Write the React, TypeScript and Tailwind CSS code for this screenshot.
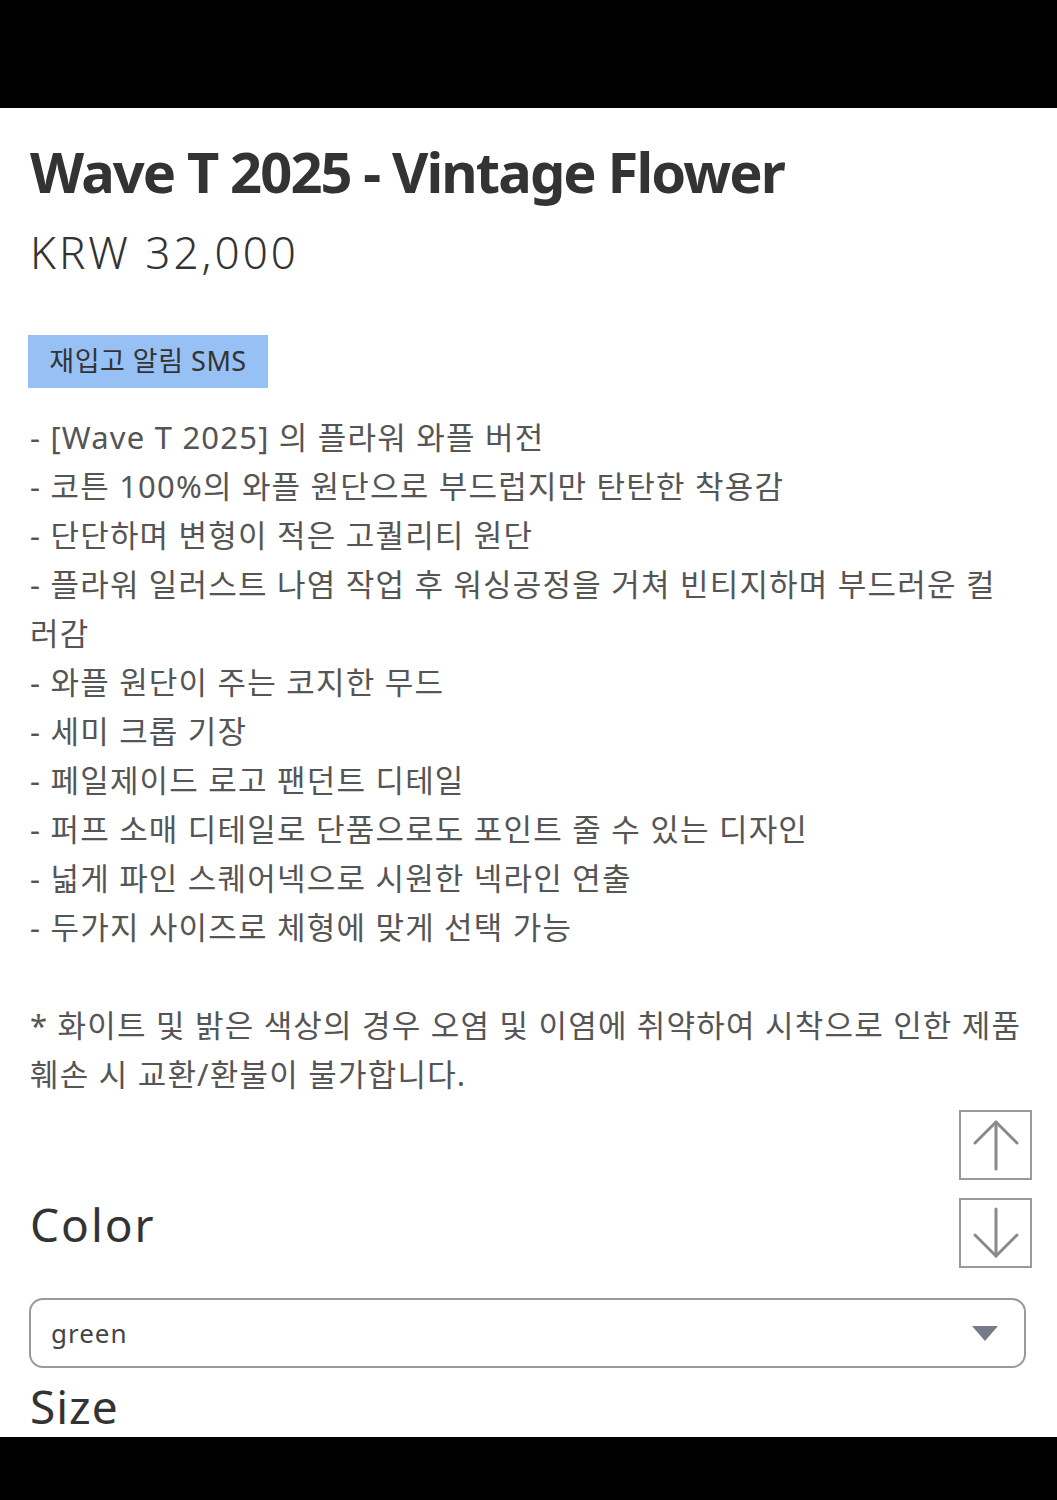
import React from 'react'

const bullets = [
  '- [Wave T 2025] 의 플라워 와플 버전',
  '- 코튼 100%의 와플 원단으로 부드럽지만 탄탄한 착용감',
  '- 단단하며 변형이 적은 고퀄리티 원단',
  '- 플라워 일러스트 나염 작업 후 워싱공정을 거쳐 빈티지하며 부드러운 컬',
  '러감',
  '- 와플 원단이 주는 코지한 무드',
  '- 세미 크롭 기장',
  '- 페일제이드 로고 팬던트 디테일',
  '- 퍼프 소매 디테일로 단품으로도 포인트 줄 수 있는 디자인',
  '- 넓게 파인 스퀘어넥으로 시원한 넥라인 연출',
  '- 두가지 사이즈로 체형에 맞게 선택 가능',
]

const latin = "font-['Noto_Sans','Noto_Sans_CJK_KR',sans-serif]"
const body = "font-['Noto_Sans','Noto_Sans_CJK_KR',sans-serif]"

function ArrowBox({ dir }: { dir: 'up' | 'down' }) {
  return (
    <button className="w-[73px] h-[70px] border-2 border-[#9a9a9a] bg-white flex items-center justify-center">
      <svg width="48" height="56" viewBox="0 0 48 56" fill="none" stroke="#8a8a8a" strokeWidth="3" strokeLinecap="round" strokeLinejoin="round">
        {dir === 'up' ? (
          <>
            <path d="M24 52V5" />
            <path d="M3 26L24 5l21 21" />
          </>
        ) : (
          <>
            <path d="M24 4v47" />
            <path d="M3 30l21 21 21-21" />
          </>
        )}
      </svg>
    </button>
  )
}

export default function App() {
  return (
    <div className="w-[1057px] h-[1500px] bg-black flex flex-col overflow-hidden">
      <div className="h-[108px] shrink-0 bg-black" />
      <div className="relative h-[1329px] shrink-0 bg-white overflow-hidden px-[30px]">
        <h1 className={`${latin} mt-[26px] text-[56px] leading-[74px] font-bold tracking-[-1.9px] text-[#333]`}>
          Wave T 2025 - Vintage Flower
        </h1>
        <div className={`${latin} mt-[14px] text-[44px] leading-[60px] font-light tracking-[3px] text-[#333]`}>
          KRW 32,000
        </div>

        <div className="mt-[53px]">
          <button className={`${body} -ml-[2px] w-[240px] h-[53px] bg-[#97c0f5] text-[27px] tracking-[0.5px] text-[#333] flex items-center justify-center`}>
            재입고 알림 SMS
          </button>
        </div>

        <div className={`${body} mt-[25px] text-[31px] leading-[49px] tracking-[1.2px] text-[#555] whitespace-nowrap`}>
          {bullets.map((b) => (
            <div key={b}>{b}</div>
          ))}
          <div className="h-[49px]" />
          <div>* 화이트 및 밝은 색상의 경우 오염 및 이염에 취약하여 시착으로 인한 제품</div>
          <div>훼손 시 교환/환불이 불가합니다.</div>
        </div>

        <div className="absolute right-[25px] top-[1002px] flex flex-col gap-[18px]">
          <ArrowBox dir="up" />
          <ArrowBox dir="down" />
        </div>

        <div className={`${latin} mt-[95px] text-[46px] leading-[60px] font-normal tracking-[2px] text-[#333]`}>Color</div>

        <div className="mt-[44px] -ml-px w-[997px] h-[70px] rounded-[14px] border-2 border-[#9a9a9a] flex items-center justify-between pl-[20px] pr-[26px]">
          <span className={`${body} text-[26px] tracking-[1px] text-[#444]`}>green</span>
          <svg width="26" height="15" viewBox="0 0 26 15">
            <path d="M0 0h26L13 15z" fill="#777a88" />
          </svg>
        </div>

        <div className={`${latin} mt-[8px] text-[46px] leading-[60px] font-normal tracking-[1px] text-[#333]`}>Size</div>
      </div>
      <div className="flex-1 bg-black" />
    </div>
  )
}
